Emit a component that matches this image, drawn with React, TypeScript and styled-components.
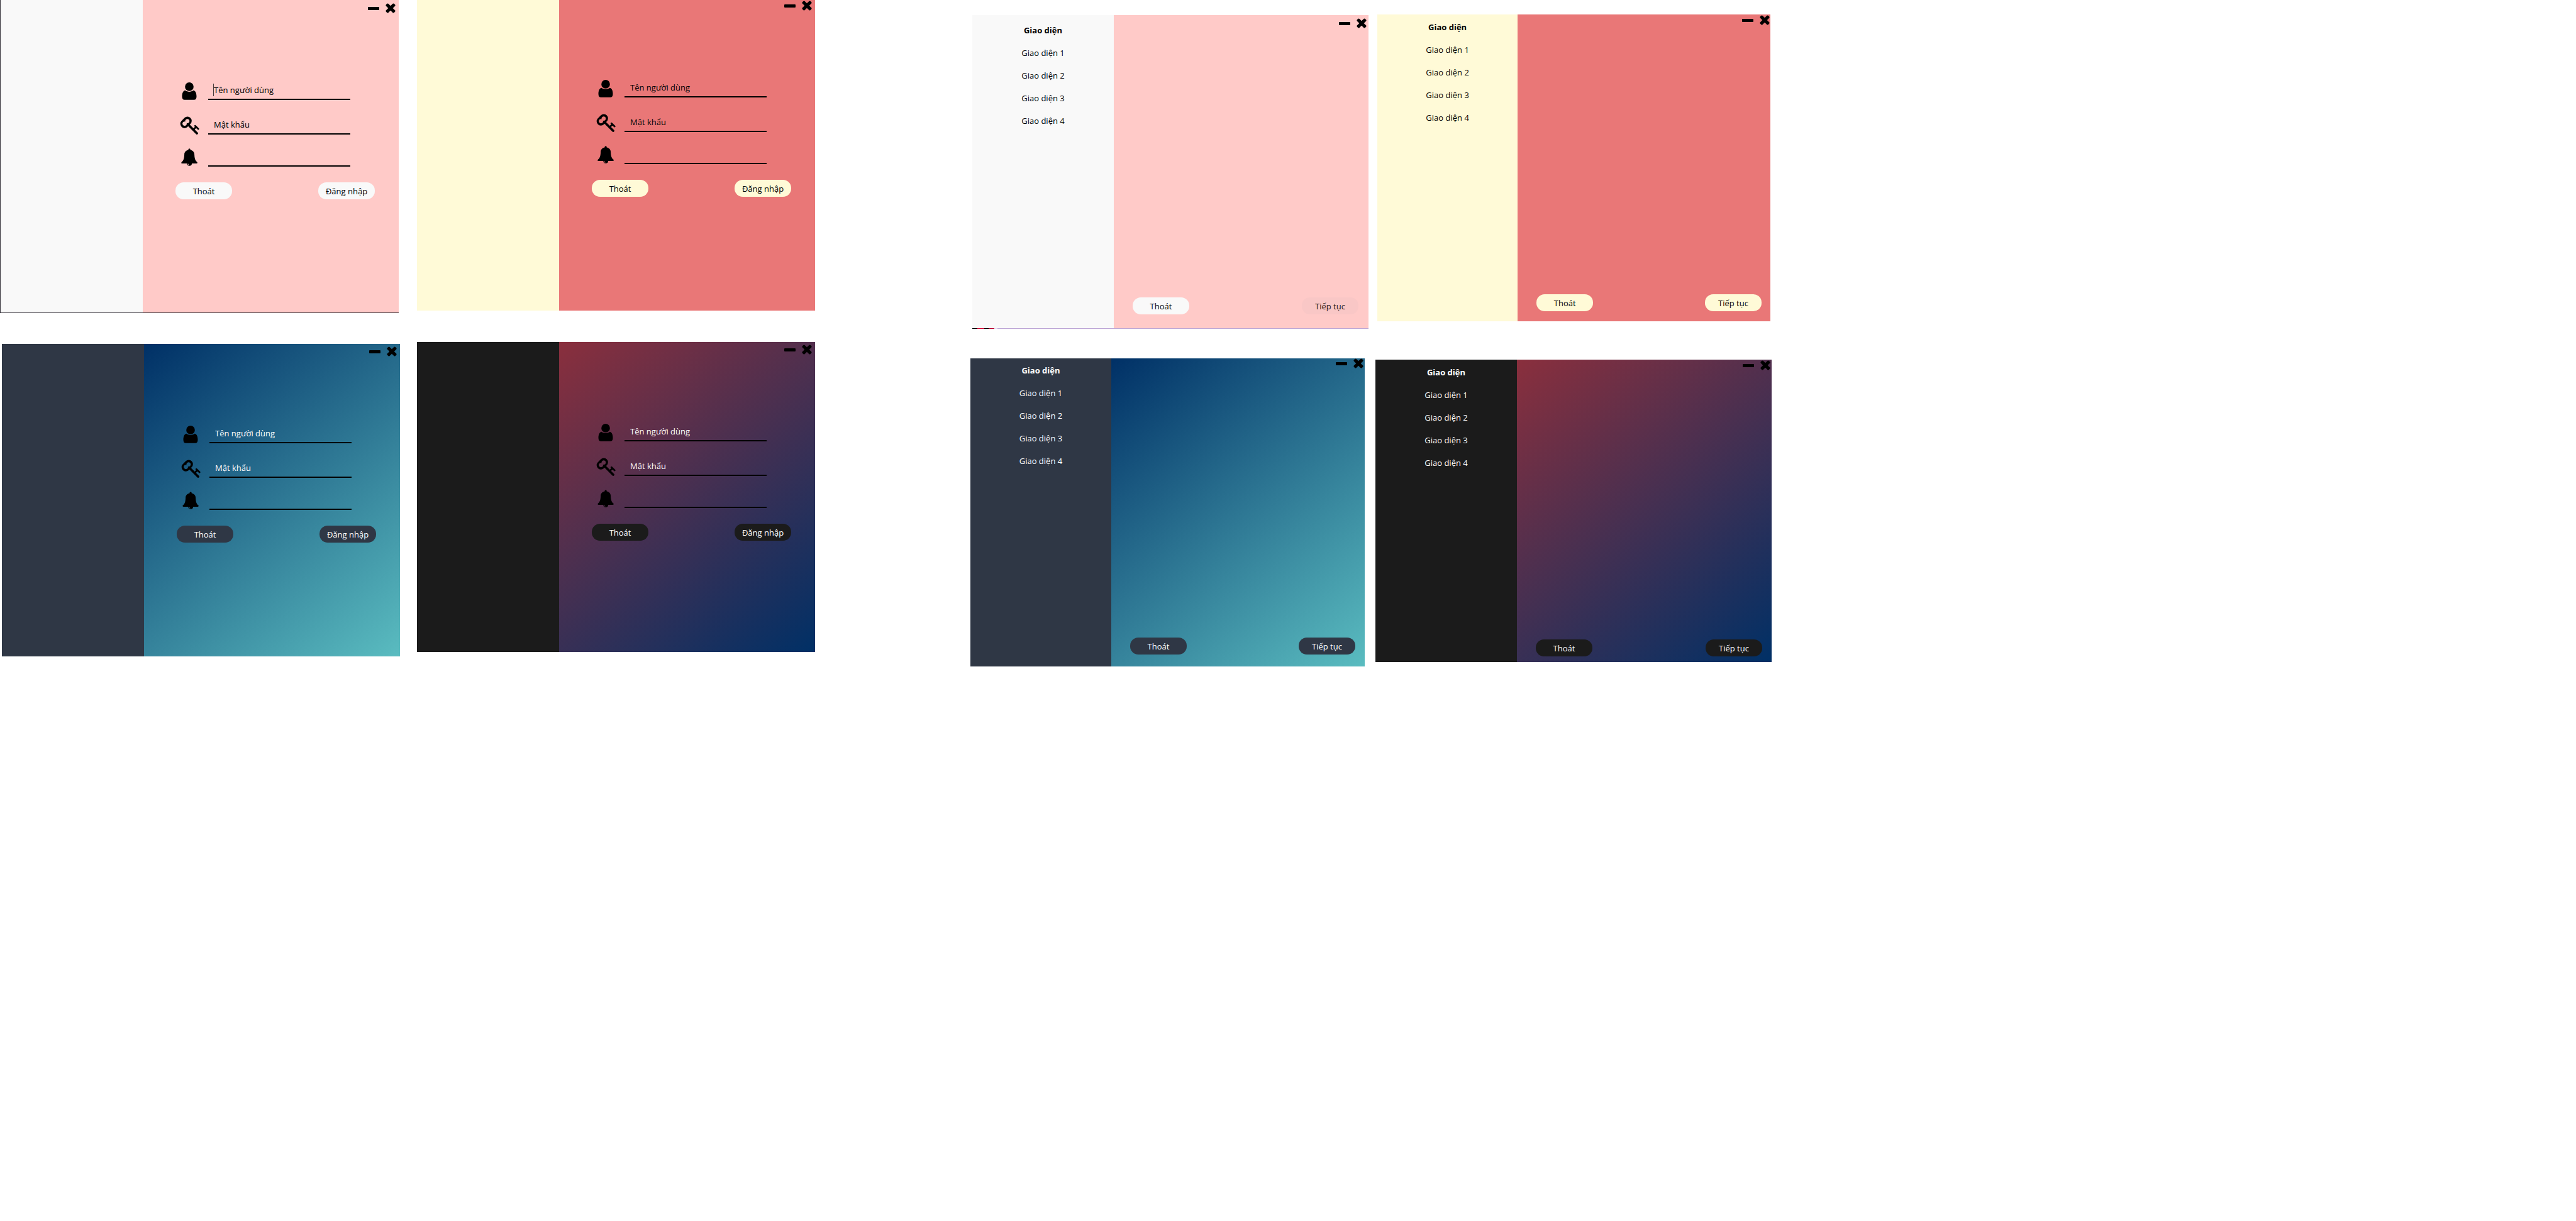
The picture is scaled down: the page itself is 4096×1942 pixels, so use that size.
import React from "react";
import styled, { createGlobalStyle, css } from "styled-components";

type Theme = {
  side: string;
  main: string;
  text: string;
  disabled: string;
};

const rose: Theme = { side: "#f9f9f9", main: "#ffcac8", text: "#000000", disabled: "#f9c7c6" };
const coral: Theme = { side: "#fffad7", main: "#e97777", text: "#000000", disabled: "#e48080" };
const ocean: Theme = {
  side: "#2f3745",
  main: "linear-gradient(141deg, #003066, #5abcc0)",
  text: "#ffffff",
  disabled: "#2f3745",
};
const dusk: Theme = {
  side: "#1b1b1b",
  main: "linear-gradient(141deg, #8a2f3d, #003066)",
  text: "#ffffff",
  disabled: "#1b1b1b",
};

const GlobalStyle = createGlobalStyle`
  *, *::before, *::after { box-sizing: border-box; }
  body {
    margin: 0;
    background: #ffffff;
    font-family: "Open Sans", "Noto Sans", sans-serif;
    font-size: 13px;
    line-height: 20px;
  }
`;

const Board = styled.main`
  display: grid;
  grid-template-columns: 636fr 27fr 633fr 247fr 633fr 11fr 630fr 1279fr;
  align-items: start;
`;

const Column = styled.div<{ $track: number; $top: number; $gap: number }>`
  grid-column: ${(p) => p.$track};
  display: flex;
  flex-direction: column;
  gap: ${(p) => p.$gap}px;
  padding-top: ${(p) => p.$top}px;
`;

const Frame = styled.section<{ $theme: Theme; $inset?: string; $edge?: "dark" | "lilac" }>`
  display: grid;
  grid-template-columns: 5fr 9fr;
  margin: ${(p) => p.$inset ?? "0"};
  color: ${(p) => p.$theme.text};
  ${(p) =>
    p.$edge === "dark" &&
    css`
      border-left: 1px solid #35323a;
      border-bottom: 1px solid #35323a;
    `}
  ${(p) =>
    p.$edge === "lilac" &&
    css`
      padding-bottom: 1px;
      background: linear-gradient(
        90deg,
        #000000 0 8px,
        #d4002f 8px 19px,
        #000000 19px 26px,
        #b8002c 26px 35px,
        #e6dcf2 35px 40px,
        #bda6d6 40px
      );
    `}
`;

const Side = styled.aside<{ $theme: Theme; $top: number }>`
  padding-top: ${(p) => p.$top}px;
  background: ${(p) => p.$theme.side};
  text-align: center;
`;

const SideTitle = styled.h2`
  margin: 0;
  font-size: 13px;
  font-weight: 700;
  line-height: 36px;
`;

const ThemeList = styled.ul`
  margin: 0;
  padding: 0;
  list-style: none;
`;

const ThemeButton = styled.button`
  display: block;
  width: 100%;
  height: 36px;
  padding: 0;
  border: 0;
  background: none;
  color: inherit;
  font: inherit;
`;

const Main = styled.div<{ $theme: Theme; $top: number; $bottom: number }>`
  display: flex;
  flex-direction: column;
  padding-top: ${(p) => p.$top}px;
  padding-bottom: ${(p) => p.$bottom}px;
  background: ${(p) => p.$theme.main};
`;

const TitleBar = styled.header<{ $right: number }>`
  display: flex;
  justify-content: flex-end;
  gap: 10px;
  height: 16px;
  padding-right: ${(p) => p.$right}px;
`;

const TitleButton = styled.button`
  display: flex;
  align-items: center;
  justify-content: center;
  height: 16px;
  padding: 0;
  border: 0;
  background: none;
  color: #000000;
`;

const Form = styled.form`
  display: flex;
  flex-direction: column;
  gap: 21px;
  margin-top: 104px;
  padding: 0 38px 0 52px;
`;

const FieldRow = styled.div<{ $short?: boolean }>`
  display: flex;
  align-items: flex-end;
  gap: 14px;
  height: ${(p) => (p.$short ? 30 : 34)}px;
  padding: 0 39px 0 6px;
`;

const FieldIcon = styled.label`
  flex: none;
  width: 32px;
  height: 30px;
  color: #000000;

  svg {
    display: block;
  }
`;

const FieldBody = styled.div`
  position: relative;
  flex: 1;
  height: 100%;
  border-bottom: 2px solid #000000;
`;

const Input = styled.input`
  display: block;
  width: 100%;
  height: 28px;
  padding: 8px 0 0 9px;
  border: 0;
  outline: 0;
  background: none;
  color: inherit;
  font: inherit;

  &::placeholder {
    color: inherit;
    opacity: 1;
  }
`;

const Notice = styled.output`
  display: block;
  padding-left: 9px;
`;

const Caret = styled.span`
  position: absolute;
  left: 8px;
  top: 8px;
  width: 1px;
  height: 20px;
  background: #4a3b3b;
`;

const Actions = styled.div`
  display: flex;
  justify-content: space-between;
`;

const FormActions = styled(Actions)`
  margin-top: 4px;
`;

const FooterActions = styled(Actions)<{ $right: number }>`
  margin-top: 428px;
  padding: 0 ${(p) => p.$right}px 0 30px;
`;

const Pill = styled.button<{ $theme: Theme }>`
  width: 90px;
  height: 27px;
  padding: 0;
  border: 0;
  border-radius: 13px;
  background: ${(p) => p.$theme.side};
  color: inherit;
  font: inherit;

  &:disabled {
    background: ${(p) => p.$theme.disabled};
    color: #1d1717;
  }
`;

const MinusIcon = () => (
  <svg width="18" height="16" viewBox="0 0 18 16" fill="currentColor" aria-hidden="true">
    <rect x="0" y="6" width="18" height="5" rx="1" />
  </svg>
);

const CrossIcon = () => (
  <svg width="16" height="16" viewBox="0 0 16 16" fill="currentColor" aria-hidden="true">
    <rect x="5.4" y="-1" width="5.200" height="18" rx="1.700" transform="rotate(45 8 8)" />
    <rect x="5.4" y="-1" width="5.200" height="18" rx="1.700" transform="rotate(-45 8 8)" />
  </svg>
);

const UserIcon = () => (
  <svg width="32" height="30" viewBox="0 0 32 30" fill="currentColor" aria-hidden="true">
    <ellipse cx="16" cy="8.9" rx="6.8" ry="6.9" />
    <path d="M9.4 14.8c4 2.8 9.2 2.8 13.2 0 3 .3 4.9 4.3 4.9 9.6 0 3.400-1.400 5.300-4 5.300h-15c-2.600 0-4-1.900-4-5.300 0-5.300 1.900-9.300 4.900-9.600z" />
  </svg>
);

const KeyIcon = () => (
  <svg width="32" height="30" viewBox="0 0 32 30" fill="none" stroke="currentColor" aria-hidden="true">
    <path
      fill="currentColor"
      stroke="none"
      fillRule="evenodd"
      d="M8.5 3.2A6.8 6.8 0 0 1 18.1 12.8L13 18A6.8 6.8 0 0 1 3.4 8.4ZM9.6 9.5A3.4 3.4 0 1 1 11.8 11.8A3.400 3.400 0 1 1 9.600 9.500Z"
    />
    <path d="M15.500 15.500 28 28" strokeWidth="3.800" strokeLinecap="round" />
    <path d="M22.500 22 27 17.800M25.300 16.200 30.200 21" strokeWidth="2.800" strokeLinecap="round" />
  </svg>
);

const BellIcon = () => (
  <svg width="32" height="30" viewBox="0 0 32 30" fill="currentColor" aria-hidden="true">
    <path d="M14.500 2.800a1.600 1.600 0 0 1 3.200 0v.7c3.900.7 6.300 3.500 6.400 7.200.2 6.300 1.400 9.600 4 11.900 1.300 1.200 1 2.300-.6 2.300H4.700c-1.600 0-1.900-1.100-.6-2.300 2.600-2.300 3.800-5.600 4-11.900.1-3.700 2.500-6.500 6.400-7.200z" />
    <path
      fillRule="evenodd"
      d="M12.300 24.800a3.900 3.900 0 0 0 7.800 0zM13.500 25.400c.1 1.400 1 2.300 2.300 2.500-.8-.6-1.200-1.400-1.300-2.500z"
    />
  </svg>
);

const WindowControls = ({ right }: { right: number }) => (
  <TitleBar $right={right}>
    <TitleButton type="button" aria-label="Thu nhỏ">
      <MinusIcon />
    </TitleButton>
    <TitleButton type="button" aria-label="Đóng">
      <CrossIcon />
    </TitleButton>
  </TitleBar>
);

type LoginProps = {
  id: string;
  theme: Theme;
  top: number;
  bottom: number;
  inset?: string;
  edge?: "dark";
  focused?: boolean;
};

const LoginWindow = ({ id, theme, top, bottom, inset, edge, focused }: LoginProps) => (
  <Frame $theme={theme} $inset={inset} $edge={edge}>
    <Side $theme={theme} $top={0} />
    <Main $theme={theme} $top={top} $bottom={bottom}>
      <WindowControls right={5} />
      <Form>
        <FieldRow>
          <FieldIcon htmlFor={`${id}-user`} aria-label="Tên người dùng">
            <UserIcon />
          </FieldIcon>
          <FieldBody>
            {focused && <Caret />}
            <Input id={`${id}-user`} type="text" placeholder="Tên người dùng" />
          </FieldBody>
        </FieldRow>
        <FieldRow>
          <FieldIcon htmlFor={`${id}-pass`} aria-label="Mật khẩu">
            <KeyIcon />
          </FieldIcon>
          <FieldBody>
            <Input id={`${id}-pass`} type="password" placeholder="Mật khẩu" />
          </FieldBody>
        </FieldRow>
        <FieldRow $short>
          <FieldIcon htmlFor={`${id}-notice`} aria-label="Thông báo">
            <BellIcon />
          </FieldIcon>
          <FieldBody>
            <Notice id={`${id}-notice`} />
          </FieldBody>
        </FieldRow>
        <FormActions>
          <Pill type="button" $theme={theme}>Thoát</Pill>
          <Pill type="button" $theme={theme}>Đăng nhập</Pill>
        </FormActions>
      </Form>
    </Main>
  </Frame>
);

type PickerProps = {
  theme: Theme;
  top: number;
  bottom: number;
  right: number;
  inset?: string;
  edge?: "lilac";
  locked?: boolean;
};

const themeNames = ["Giao diện 1", "Giao diện 2", "Giao diện 3", "Giao diện 4"];

const PickerWindow = ({ theme, top, bottom, right, inset, edge, locked }: PickerProps) => (
  <Frame $theme={theme} $inset={inset} $edge={edge}>
    <Side $theme={theme} $top={top + 1}>
      <SideTitle>Giao diện</SideTitle>
      <ThemeList>
        {themeNames.map((name) => (
          <li key={name}>
            <ThemeButton type="button">{name}</ThemeButton>
          </li>
        ))}
      </ThemeList>
    </Side>
    <Main $theme={theme} $top={top} $bottom={bottom}>
      <WindowControls right={right} />
      <FooterActions $right={right + 13}>
        <Pill type="button" $theme={theme}>Thoát</Pill>
        <Pill type="button" $theme={theme} disabled={locked}>Tiếp tục</Pill>
      </FooterActions>
    </Main>
  </Frame>
);

export default function App() {
  return (
    <>
      <GlobalStyle />
      <Board>
        <Column $track={1} $top={0} $gap={49}>
          <LoginWindow id="rose" theme={rose} top={5} bottom={180} inset="0 2px 0 0" edge="dark" focused />
          <LoginWindow id="ocean" theme={ocean} top={4} bottom={181} inset="0 0 0 3px" />
        </Column>
        <Column $track={3} $top={0} $gap={50}>
          <LoginWindow id="coral" theme={coral} top={1} bottom={181} />
          <LoginWindow id="dusk" theme={dusk} top={4} bottom={177} />
        </Column>
        <Column $track={5} $top={24} $gap={47}>
          <PickerWindow theme={rose} top={5} bottom={22} right={3} inset="0 0 0 3px" edge="lilac" locked />
          <PickerWindow theme={ocean} top={0} bottom={19} right={2} inset="0 6px 0 0" />
        </Column>
        <Column $track={7} $top={23} $gap={61}>
          <PickerWindow theme={coral} top={1} bottom={16} right={1} inset="0 2px 0 3px" />
          <PickerWindow theme={dusk} top={1} bottom={9} right={2} />
        </Column>
      </Board>
    </>
  );
}
